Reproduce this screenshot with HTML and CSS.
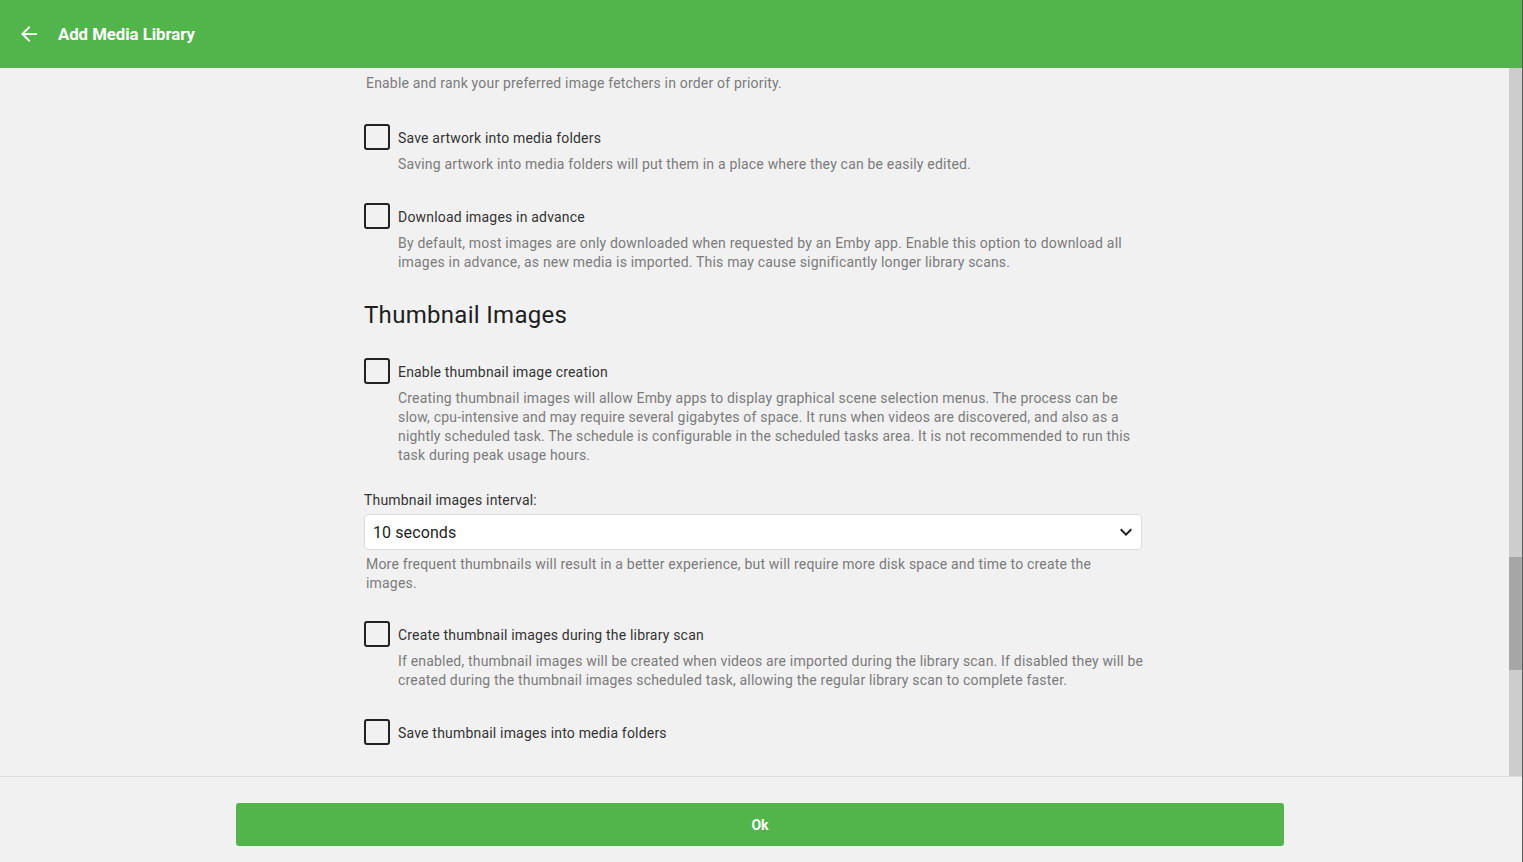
FILE: index.html
```html
<!DOCTYPE html>
<html lang="en">
<head>
<meta charset="utf-8">
<title>Add Media Library</title>
<link rel="stylesheet" href="styles.css">
</head>
<body>
<div class="dialog">
  <header class="header">
    <button class="back" aria-label="Back">
      <svg viewBox="0 0 24 24" width="24" height="24"><path fill="#fff" d="M20 11H7.83l5.59-5.59L12 4l-8 8 8 8 1.41-1.41L7.83 13H20v-2z"/></svg>
    </button>
    <h1 class="title">Add Media Library</h1>
  </header>
  <div class="body">
    <div class="scroller">
      <div class="content">
        <div class="field-desc first">Enable and rank your preferred image fetchers in order of priority.</div>

        <div class="check-item">
          <label class="check-row"><span class="box"></span><span class="check-label">Save artwork into media folders</span></label>
          <div class="check-desc">Saving artwork into media folders will put them in a place where they can be easily edited.</div>
        </div>

        <div class="check-item">
          <label class="check-row"><span class="box"></span><span class="check-label">Download images in advance</span></label>
          <div class="check-desc">By default, most images are only downloaded when requested by an Emby app. Enable this option to download all images in advance, as new media is imported. This may cause significantly longer library scans.</div>
        </div>

        <h2 class="section-title">Thumbnail Images</h2>

        <div class="check-item">
          <label class="check-row"><span class="box"></span><span class="check-label">Enable thumbnail image creation</span></label>
          <div class="check-desc">Creating thumbnail images will allow Emby apps to display graphical scene selection menus. The process can be slow, cpu-intensive and may require several gigabytes of space. It runs when videos are discovered, and also as a nightly scheduled task. The schedule is configurable in the scheduled tasks area. It is not recommended to run this task during peak usage hours.</div>
        </div>

        <div class="select-field">
          <div class="select-label">Thumbnail images interval:</div>
          <div class="select">
            <span class="select-value">10 seconds</span>
            <svg class="chevron" viewBox="0 0 24 24" width="24" height="24"><path fill="#222" d="M16.59 8.59L12 13.17 7.41 8.59 6 10l6 6 6-6z"/></svg>
          </div>
          <div class="field-desc">More frequent thumbnails will result in a better experience, but will require more disk space and time to create the images.</div>
        </div>

        <div class="check-item">
          <label class="check-row"><span class="box"></span><span class="check-label">Create thumbnail images during the library scan</span></label>
          <div class="check-desc">If enabled, thumbnail images will be created when videos are imported during the library scan. If disabled they will be created during the thumbnail images scheduled task, allowing the regular library scan to complete faster.</div>
        </div>

        <div class="check-item">
          <label class="check-row"><span class="box"></span><span class="check-label">Save thumbnail images into media folders</span></label>
        </div>
      </div>
    </div>
    <div class="scrollbar"><div class="thumb"></div></div>
  </div>
  <footer class="footer">
    <button class="ok">Ok</button>
  </footer>
</div>
</body>
</html>
```

FILE: styles.css
```css
* { box-sizing: border-box; }
html, body { margin: 0; padding: 0; }
body {
  background: #5a5a5a;
  font-family: Roboto, "Noto Sans", Arial, sans-serif;
  width: 1523px;
  height: 862px;
  overflow: hidden;
}
.dialog {
  width: 1522px;
  height: 862px;
  background: #f1f1f1;
  display: flex;
  flex-direction: column;
}
.header {
  height: 68px;
  flex: none;
  background: #52b54b;
  display: flex;
  align-items: center;
  padding-left: 17px;
}
.back {
  background: none;
  border: 0;
  padding: 0;
  width: 24px;
  height: 24px;
  display: flex;
  cursor: pointer;
}
.title {
  margin: 0 0 0 17px;
  color: #fff;
  font-size: 16.8px;
  font-weight: 700;
  letter-spacing: -0.05px;
}
.body {
  flex: 1;
  display: flex;
  min-height: 0;
}
.scroller {
  flex: 1;
  overflow: hidden;
}
.scrollbar {
  width: 13px;
  flex: none;
  background: #cdcdcd;
}
.thumb {
  margin-top: 489px;
  height: 113px;
  background: #a6a6a6;
}
.content {
  width: 778px;
  margin-left: 364px;
  padding-top: 6px;
  font-size: 14px;
  line-height: 19px;
  letter-spacing: 0.19px;
}
.field-desc {
  color: #7b7b7b;
  padding-left: 2px;
}
.field-desc.first { margin-bottom: 31px; }
.check-item { margin-bottom: 29px; }
.check-row {
  display: flex;
  align-items: center;
  height: 26px;
}
.box {
  width: 26px;
  height: 26px;
  border: 2px solid #222;
  border-radius: 3px;
  flex: none;
}
.check-label {
  margin-left: 8px;
  padding-top: 2px;
  color: #333;
}
.check-desc {
  margin: 5px -2px 0 34px;
  color: #7b7b7b;
}
.section-title {
  margin: 1px 0 28px;
  font-size: 24px;
  line-height: 29px;
  font-weight: 400;
  letter-spacing: 0.3px;
  color: #1e1e1e;
}
.select-field { margin: -3px 0 28px; }
.select-label { color: #333; }
.select {
  margin: 4px 0 5px;
  height: 36px;
  background: #fff;
  border: 1px solid #dcdcdc;
  border-radius: 4px;
  display: flex;
  align-items: center;
  justify-content: space-between;
  padding: 0 3px 0 8px;
}
.select-value {
  font-size: 16px;
  letter-spacing: 0.1px;
  color: #222;
}
.footer {
  height: 86px;
  flex: none;
  border-top: 1px solid #dcdcdc;
  display: flex;
  justify-content: center;
  padding-top: 26px;
  padding-right: 2px;
}
.ok {
  width: 1048px;
  height: 43px;
  background: #52b54b;
  color: #fff;
  border: 0;
  border-radius: 3px;
  font-family: Roboto, Arial, sans-serif;
  font-size: 14px;
  font-weight: 700;
  cursor: pointer;
}
```
